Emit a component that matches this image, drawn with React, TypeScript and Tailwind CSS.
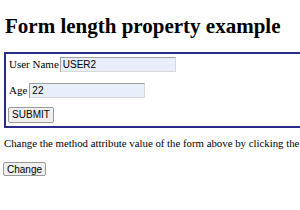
import React from "react";

export default function App() {
  return (
    <div className="w-[300px] h-[210px] overflow-hidden bg-white text-black font-['Liberation_Serif',serif]">
      <div className="pl-[5px] pt-[15px] whitespace-nowrap">
        <h1 className="text-[21px] leading-[22px] font-bold">Form length property example</h1>
      </div>
      <div className="mt-[15px] ml-[4px] w-[310px] border-2 border-[#2b2b8c] pl-[2px] pt-[2px] pb-[3px] text-[11px]">
        <div className="flex items-center h-[16px]">
          <span className="ml-[1px]">User Name</span>
          <div className="ml-[1px] w-[116px] h-[15px] bg-[#e8eefa] border border-[#a0a0a0] border-b-[#d8d8d8] border-r-[#d8d8d8] pl-[2px] text-[10px] leading-[13px] font-['Liberation_Sans',sans-serif]">USER2</div>
        </div>
        <div className="flex items-center h-[16px] mt-[10px]">
          <span className="ml-[1px]">Age</span>
          <div className="ml-[2px] w-[116px] h-[15px] bg-[#e8eefa] border border-[#a0a0a0] border-b-[#d8d8d8] border-r-[#d8d8d8] pl-[2px] text-[10px] leading-[13px] font-['Liberation_Sans',sans-serif]">22</div>
        </div>
        <div className="mt-[8px]">
          <div className="inline-flex items-center justify-center w-[46px] h-[16px] bg-[#efefef] border border-[#9a9a9a] rounded-[2px] text-[10px] font-['Liberation_Sans',sans-serif]">SUBMIT</div>
        </div>
      </div>
      <p className="mt-[9px] ml-[4px] whitespace-nowrap text-[10.8px] leading-[13px]">Change the method attribute value of the form above by clicking the button below.</p>
      <div className="mt-[6px] ml-[3px]">
        <div className="inline-flex items-center justify-center w-[43px] h-[14px] bg-[#efefef] border border-[#9a9a9a] rounded-[2px] text-[10px] font-['Liberation_Sans',sans-serif]">Change</div>
      </div>
    </div>
  );
}
